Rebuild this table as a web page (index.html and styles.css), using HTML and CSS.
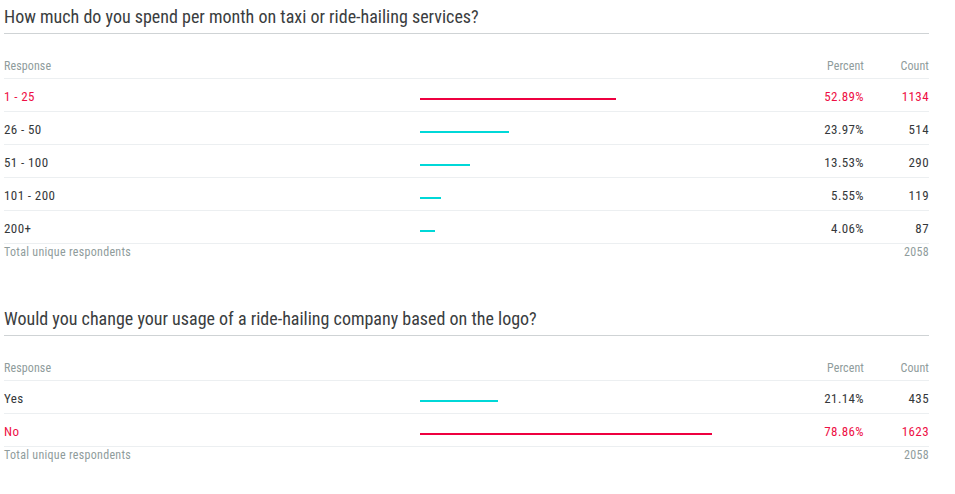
FILE: index.html
```html
<!DOCTYPE html>
<html>
<head>
<meta charset="utf-8">
<link rel="stylesheet" href="styles.css">
</head>
<body>
<div class="page">
  <section class="question">
    <h2 class="q-title">How much do you spend per month on taxi or ride-hailing services?</h2>
    <div class="table">
      <div class="row head">
        <div class="c-label">Response</div>
        <div class="c-bar"></div>
        <div class="c-pct">Percent</div>
        <div class="c-cnt">Count</div>
      </div>
      <div class="row top">
        <div class="c-label">1 - 25</div>
        <div class="c-bar"><span class="bar" style="width:52.89%"></span></div>
        <div class="c-pct">52.89%</div>
        <div class="c-cnt">1134</div>
      </div>
      <div class="row">
        <div class="c-label">26 - 50</div>
        <div class="c-bar"><span class="bar" style="width:23.97%"></span></div>
        <div class="c-pct">23.97%</div>
        <div class="c-cnt">514</div>
      </div>
      <div class="row">
        <div class="c-label">51 - 100</div>
        <div class="c-bar"><span class="bar" style="width:13.53%"></span></div>
        <div class="c-pct">13.53%</div>
        <div class="c-cnt">290</div>
      </div>
      <div class="row">
        <div class="c-label">101 - 200</div>
        <div class="c-bar"><span class="bar" style="width:5.55%"></span></div>
        <div class="c-pct">5.55%</div>
        <div class="c-cnt">119</div>
      </div>
      <div class="row">
        <div class="c-label">200+</div>
        <div class="c-bar"><span class="bar" style="width:4.06%"></span></div>
        <div class="c-pct">4.06%</div>
        <div class="c-cnt">87</div>
      </div>
      <div class="row total">
        <div class="c-label">Total unique respondents</div>
        <div class="c-bar"></div>
        <div class="c-pct"></div>
        <div class="c-cnt">2058</div>
      </div>
    </div>
  </section>
  <section class="question">
    <h2 class="q-title">Would you change your usage of a ride-hailing company based on the logo?</h2>
    <div class="table">
      <div class="row head">
        <div class="c-label">Response</div>
        <div class="c-bar"></div>
        <div class="c-pct">Percent</div>
        <div class="c-cnt">Count</div>
      </div>
      <div class="row">
        <div class="c-label">Yes</div>
        <div class="c-bar"><span class="bar" style="width:21.14%"></span></div>
        <div class="c-pct">21.14%</div>
        <div class="c-cnt">435</div>
      </div>
      <div class="row top">
        <div class="c-label">No</div>
        <div class="c-bar"><span class="bar" style="width:78.86%"></span></div>
        <div class="c-pct">78.86%</div>
        <div class="c-cnt">1623</div>
      </div>
      <div class="row total">
        <div class="c-label">Total unique respondents</div>
        <div class="c-bar"></div>
        <div class="c-pct"></div>
        <div class="c-cnt">2058</div>
      </div>
    </div>
  </section>
</div>
</body>
</html>
```

FILE: styles.css
```css
html, body {
  margin: 0;
  padding: 0;
  background: #ffffff;
}
body {
  font-family: "Roboto Condensed", "Roboto", sans-serif;
  font-stretch: 80%;
  color: #35383a;
}
.page {
  width: 925px;
  padding: 0 0 0 4px;
}
.question {
  margin-bottom: 42px;
}
.q-title {
  margin: 0;
  font-weight: 400;
  font-size: 18px;
  line-height: 22px;
  padding: 6px 0 5px;
  border-bottom: 1px solid #cfd3d5;
  color: #3a3d40;
}
.table {
  margin-top: 18px;
}
.row {
  box-sizing: border-box;
  display: grid;
  grid-template-columns: 416px 370px 74px 65px;
  align-items: center;
  height: 33px;
  padding-top: 3px;
  border-bottom: 1px solid #eceff1;
  font-size: 13px;
  letter-spacing: 0.4px;
}
.row.head {
  height: 27px;
  padding-top: 2px;
  font-size: 12px;
  letter-spacing: 0.1px;
  color: #8f9c9c;
}
.row.top {
  color: #ee0f45;
}
.row.total {
  height: 16px;
  padding-top: 1px;
  border-bottom: none;
  font-size: 12px;
  letter-spacing: 0.3px;
  color: #8f9c9c;
  align-items: start;
}
.c-pct, .c-cnt {
  text-align: right;
}
.c-bar {
  height: 2px;
  display: flex;
  position: relative;
  top: 2px;
}
.bar {
  display: block;
  height: 2px;
  background: #00d8d8;
}
.row.top .bar {
  background: #ee0040;
}
```
